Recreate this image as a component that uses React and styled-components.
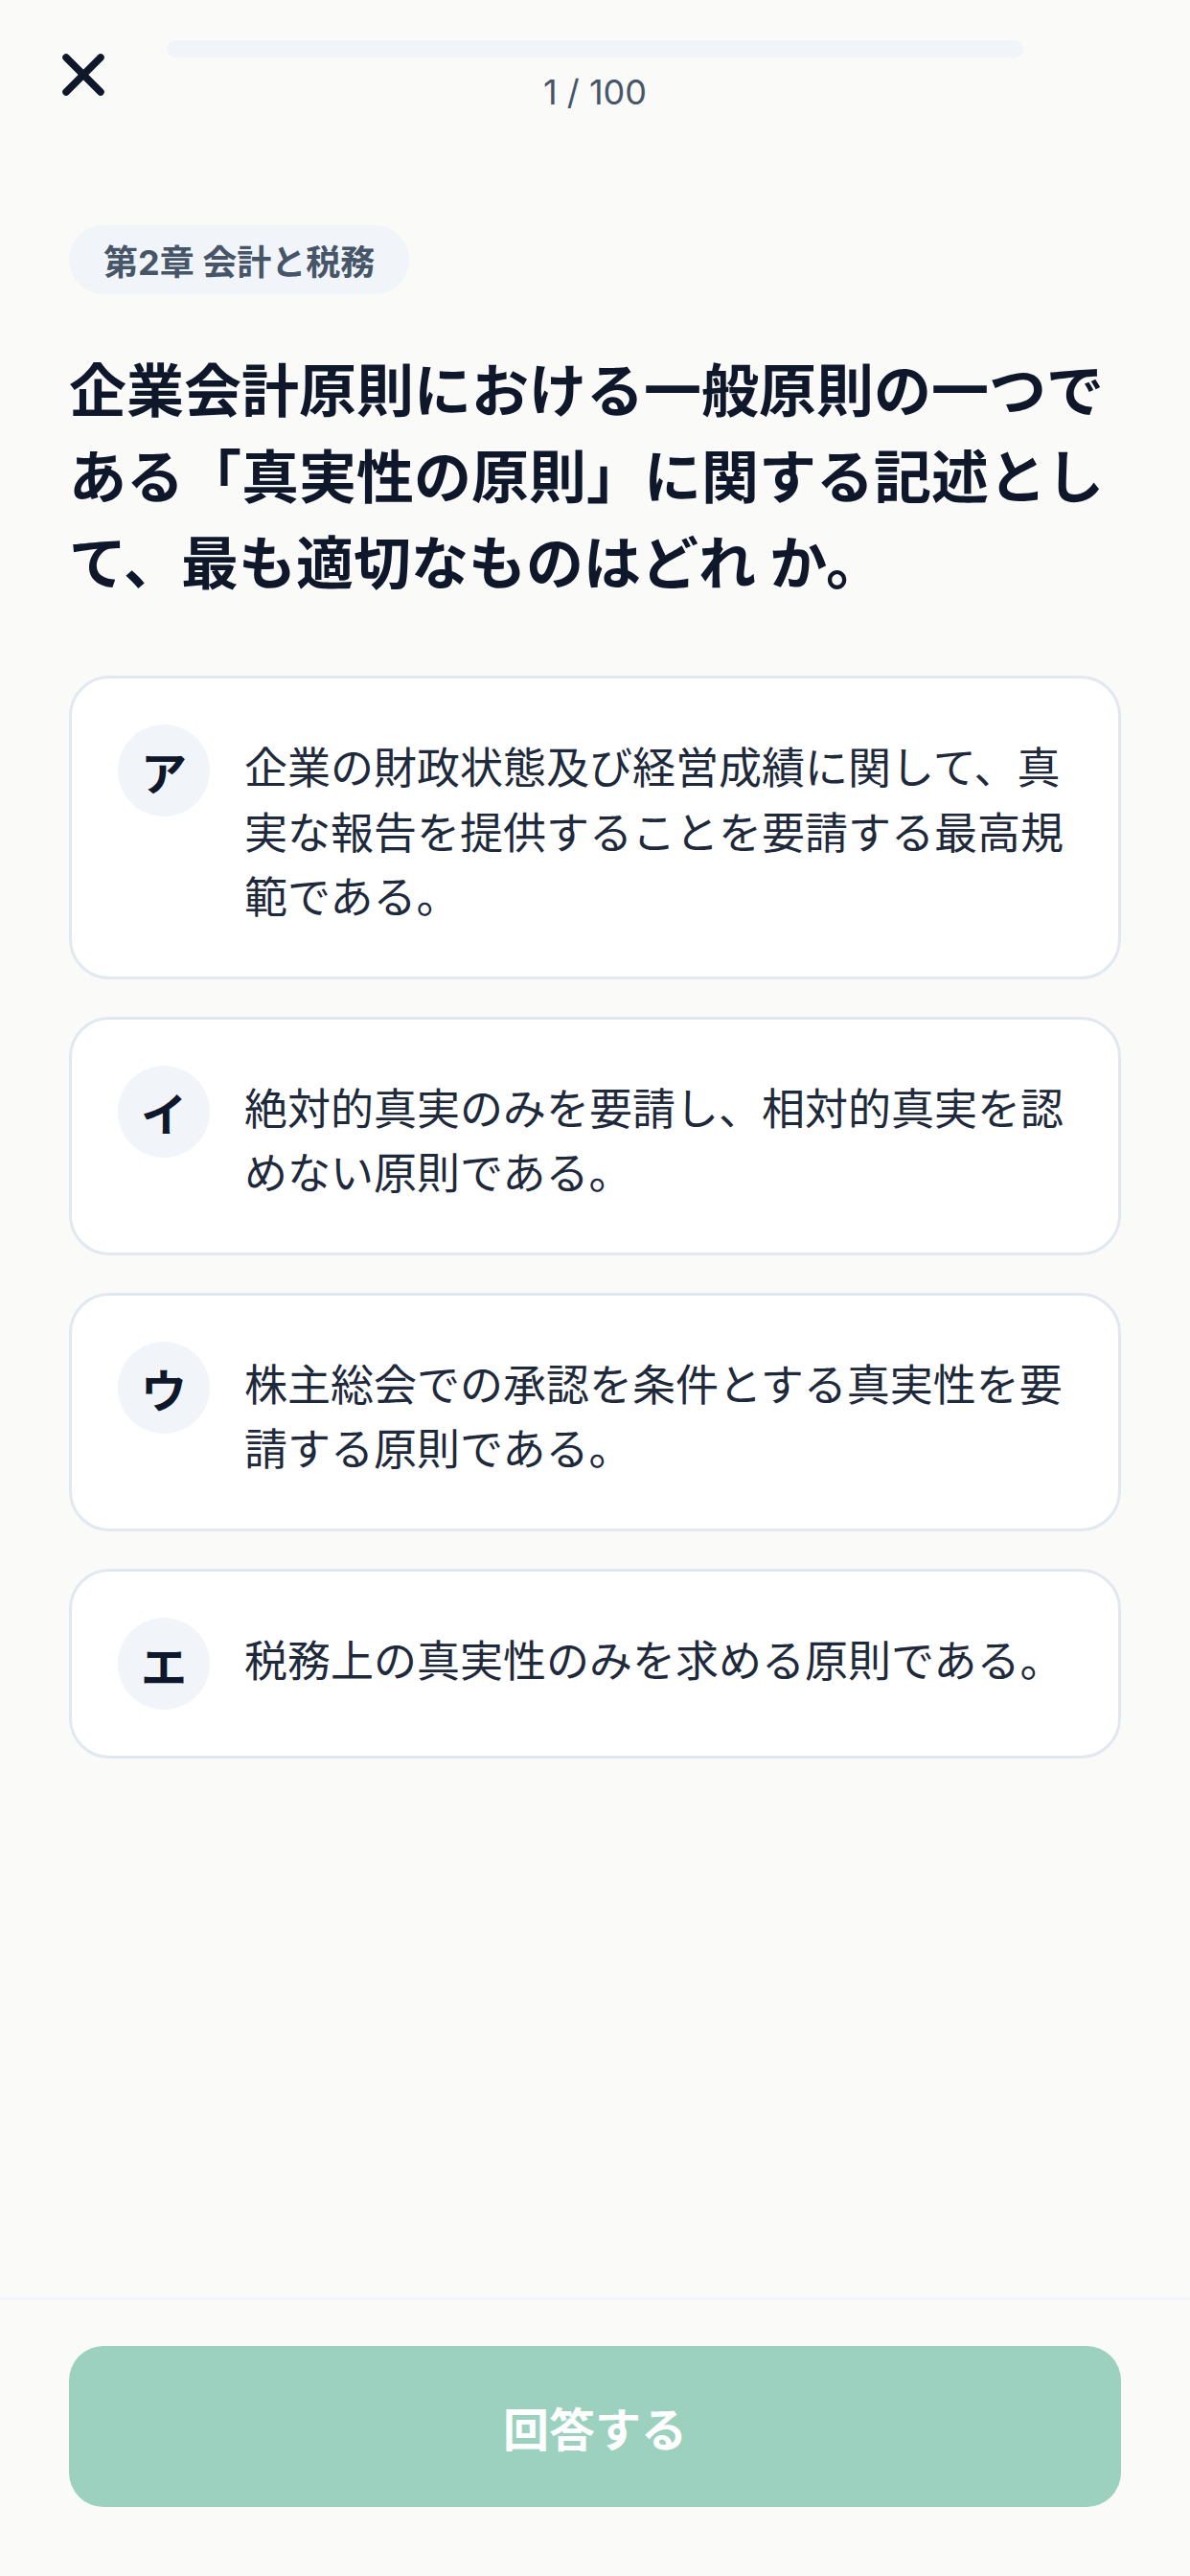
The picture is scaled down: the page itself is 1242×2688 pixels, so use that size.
import styled, { createGlobalStyle } from "styled-components";
import { X } from "lucide-react";

const question = {
  index: 1,
  total: 100,
  chapter: "第2章 会計と税務",
  text: "企業会計原則における一般原則の一つである「真実性の原則」に関する記述として、最も適切なものはどれ か。",
  options: [
    {
      key: "ア",
      text: "企業の財政状態及び経営成績に関して、真実な報告を提供することを要請する最高規範である。",
    },
    {
      key: "イ",
      text: "絶対的真実のみを要請し、相対的真実を認めない原則である。",
    },
    {
      key: "ウ",
      text: "株主総会での承認を条件とする真実性を要請する原則である。",
    },
    { key: "エ", text: "税務上の真実性のみを求める原則である。" },
  ],
};

export default function App() {
  const progress = ((question.index - 1) / question.total) * 100;

  return (
    <>
      <GlobalStyle />
      <Screen>
        <Header>
          <CloseSlot>
            <CloseButton aria-label="閉じる">
              <X size={72} strokeWidth={2.5} color="#0f172a" />
            </CloseButton>
          </CloseSlot>
          <ProgressArea>
            <Track>
              <Fill style={{ width: `${progress}%` }} />
            </Track>
            <Counter>
              {question.index} / {question.total}
            </Counter>
          </ProgressArea>
          <HeaderSpacer />
        </Header>

        <Main>
          <Chip>{question.chapter}</Chip>
          <Title>{question.text}</Title>
          <OptionList>
            {question.options.map((option) => (
              <OptionCard key={option.key}>
                <Badge>{option.key}</Badge>
                <OptionText>{option.text}</OptionText>
              </OptionCard>
            ))}
          </OptionList>
        </Main>

        <Footer>
          <SubmitButton disabled>回答する</SubmitButton>
        </Footer>
      </Screen>
    </>
  );
}

const GlobalStyle = createGlobalStyle`
  * {
    box-sizing: border-box;
  }
  body {
    margin: 0;
    background: #fafaf9;
    font-family: Inter, "Noto Sans CJK JP", sans-serif;
    color: #0f172a;
  }
`;

const Screen = styled.div`
  min-height: 100vh;
  display: flex;
  flex-direction: column;
`;

const Header = styled.header`
  display: flex;
  align-items: flex-start;
  padding-top: 42px;
`;

const CloseSlot = styled.div`
  width: 174px;
  padding-left: 51px;
`;

const CloseButton = styled.button`
  width: 72px;
  height: 72px;
  padding: 0;
  border: none;
  background: transparent;
  display: flex;
  align-items: center;
  justify-content: center;
`;

const ProgressArea = styled.div`
  flex: 1;
  display: flex;
  flex-direction: column;
  align-items: center;
`;

const Track = styled.div`
  width: 100%;
  height: 18px;
  border-radius: 9px;
  background: #f1f5f9;
  overflow: hidden;
`;

const Fill = styled.div`
  height: 100%;
  background: #34b38a;
`;

const Counter = styled.div`
  margin-top: 14px;
  font-size: 36px;
  line-height: 44px;
  color: #475569;
`;

const HeaderSpacer = styled.div`
  width: 174px;
`;

const Main = styled.main`
  flex: 1;
  padding: 0 72px;
`;

const Chip = styled.span`
  display: inline-flex;
  align-items: center;
  height: 72px;
  margin-top: 117px;
  padding: 0 36px;
  border-radius: 36px;
  background: #f1f5f9;
  color: #475569;
  font-size: 36px;
  font-weight: 700;
`;

const Title = styled.h1`
  margin: 56px 0 72px;
  font-size: 60px;
  line-height: 90px;
  font-weight: 700;
  color: #0f172a;
`;

const OptionList = styled.div`
  display: flex;
  flex-direction: column;
  gap: 39px;
`;

const OptionCard = styled.div`
  display: flex;
  align-items: flex-start;
  gap: 36px;
  padding: 48px;
  border: 3px solid #e2e8f0;
  border-radius: 42px;
  background: #ffffff;
`;

const Badge = styled.span`
  flex: none;
  width: 96px;
  height: 96px;
  border-radius: 50%;
  background: #f1f5f9;
  display: flex;
  align-items: center;
  justify-content: center;
  font-size: 48px;
  font-weight: 700;
  color: #0f172a;
`;

const OptionText = styled.p`
  flex: 1;
  margin: 0;
  padding-top: 12px;
  font-size: 45px;
  line-height: 67.5px;
  color: #1e293b;
`;

const Footer = styled.footer`
  border-top: 3px solid #f1f5f9;
  padding: 48px 72px 72px;
`;

const SubmitButton = styled.button`
  width: 100%;
  height: 168px;
  border: none;
  border-radius: 36px;
  background: #9bd1be;
  color: #ffffff;
  font-family: inherit;
  font-size: 48px;
  font-weight: 700;
`;
